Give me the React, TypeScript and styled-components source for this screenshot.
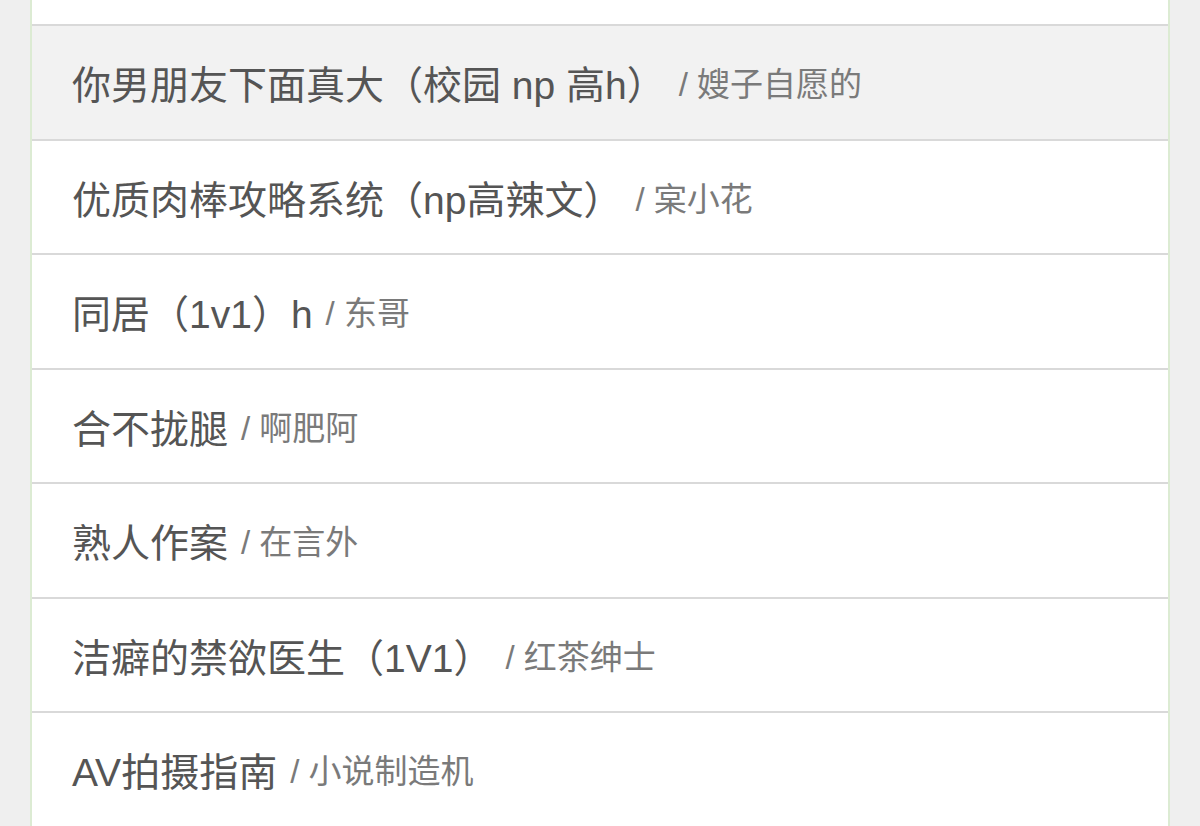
import React from "react";
import styled, { createGlobalStyle } from "styled-components";

const GlobalStyle = createGlobalStyle`
  html, body {
    margin: 0;
    padding: 0;
    background: #efefef;
  }
  body {
    font-family: "Liberation Sans", "Noto Sans CJK SC", sans-serif;
    -webkit-font-smoothing: antialiased;
  }
`;

const Page = styled.div`
  height: 826px;
  overflow: hidden;
  padding: 0 30px;
`;

const List = styled.ul`
  list-style: none;
  margin: 0;
  padding: 0;
  background: #ffffff;
  border-left: 2px solid #dcebd3;
  border-right: 2px solid #dcebd3;
`;

/* bottom of the previous entry, scrolled mostly out of view */
const Tail = styled.li`
  height: 24px;
  background: #ffffff;
`;

const Row = styled.li<{ $active?: boolean }>`
  display: flex;
  align-items: center;
  height: 112.5px;
  padding: 0 40px;
  border-top: 2px solid #d9d9d9;
  background: ${(p) => (p.$active ? "#f2f2f2" : "#ffffff")};
  white-space: nowrap;
`;

const Title = styled.span`
  font-size: 39px;
  color: #555555;
  font-family: "Liberation Sans", "Noto Sans CJK SC", sans-serif;
`;

const Author = styled.span`
  font-size: 33px;
  color: #7a7a7a;
  margin-left: 13px;
  font-family: "Liberation Sans", "Noto Sans CJK SC", sans-serif;
`;

const books = [
  { title: "你男朋友下面真大（校园 np 高h）", author: "嫂子自愿的" },
  { title: "优质肉棒攻略系统（np高辣文）", author: "宲小花" },
  { title: "同居（1v1）h", author: "东哥" },
  { title: "合不拢腿", author: "啊肥阿" },
  { title: "熟人作案", author: "在言外" },
  { title: "洁癖的禁欲医生（1V1）", author: "红茶绅士" },
  { title: "AV拍摄指南", author: "小说制造机" },
];

export default function App() {
  return (
    <>
      <GlobalStyle />
      <Page>
        <List>
          <Tail />
          {books.map((b, i) => (
            <Row key={b.title} $active={i === 0}>
              <Title>{b.title}</Title>
              <Author>/ {b.author}</Author>
            </Row>
          ))}
        </List>
      </Page>
    </>
  );
}
